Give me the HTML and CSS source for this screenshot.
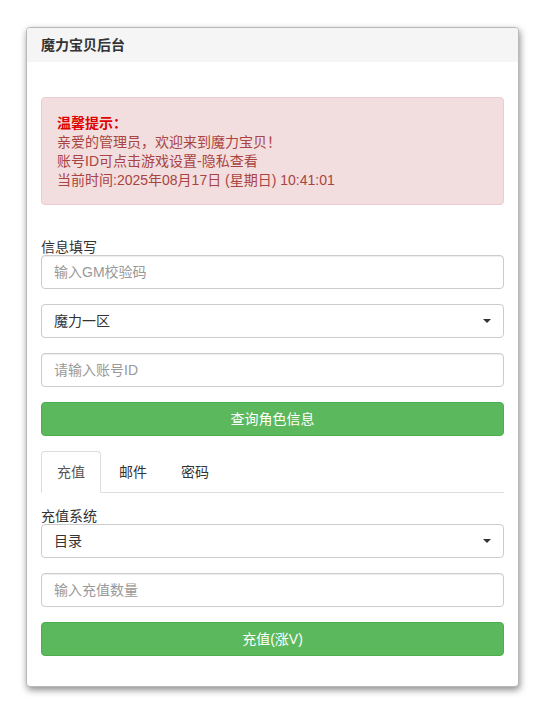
FILE: index.html
```html
<!DOCTYPE html>
<html lang="zh-CN">
<head>
<meta charset="utf-8">
<title>魔力宝贝后台</title>
<link rel="stylesheet" href="styles.css">
</head>
<body>
<div class="panel">
  <div class="panel-heading">魔力宝贝后台</div>
  <div class="panel-body">
    <div class="alert">
      <div class="alert-title">温馨提示：</div>
      <div>亲爱的管理员，欢迎来到魔力宝贝！</div>
      <div>账号ID可点击游戏设置-隐私查看</div>
      <div>当前时间:2025年08月17日 (星期日) 10:41:01</div>
    </div>

    <div class="label">信息填写</div>
    <input class="control" type="text" placeholder="输入GM校验码">
    <div class="control select"><span>魔力一区</span><span class="caret"></span></div>
    <input class="control" type="text" placeholder="请输入账号ID">
    <button class="btn">查询角色信息</button>

    <ul class="tabs">
      <li class="tab active">充值</li>
      <li class="tab">邮件</li>
      <li class="tab">密码</li>
    </ul>

    <div class="label">充值系统</div>
    <div class="control select"><span>目录</span><span class="caret"></span></div>
    <input class="control" type="text" placeholder="输入充值数量">
    <button class="btn">充值(涨V)</button>
  </div>
</div>
</body>
</html>
```
FILE: styles.css
```css
* { box-sizing: border-box; }
html, body { margin: 0; background: #fff; }
body {
  padding: 27px 26px;
  font-family: "Liberation Sans", "Noto Sans CJK SC", sans-serif;
  font-size: 14px;
  line-height: 20px;
  color: #333;
}
.panel {
  border: 1px solid #b8b8b8;
  border-radius: 4px;
  background: #fff;
  box-shadow: 1px 3px 7px rgba(0, 0, 0, 0.45);
}
.panel-heading {
  background: #f5f5f5;
  padding: 9px 14px 8px;
  font-weight: bold;
  font-size: 14px;
  line-height: 17px;
  color: #333;
  border-radius: 3px 3px 0 0;
}
.panel-body {
  padding: 35px 14px 30px;
  display: flex;
  flex-direction: column;
}
.alert {
  background: #f2dede;
  border: 1px solid #ebccd1;
  border-radius: 4px;
  color: #a94442;
  padding: 16px 15px 14px;
  line-height: 19px;
  margin-bottom: 10px;
}
.alert-title {
  color: #e00000;
  font-weight: bold;
}
.label {
  margin-top: 20px;
  padding-top: 4px;
  line-height: 16px;
  color: #333;
}
.control {
  display: block;
  width: 100%;
  height: 34px;
  border: 1px solid #ccc;
  border-radius: 4px;
  padding: 6px 12px;
  font-family: inherit;
  font-size: 14px;
  line-height: 20px;
  color: #555;
  background: #fff;
  margin-bottom: 15px;
  box-shadow: inset 0 1px 1px rgba(0, 0, 0, 0.075);
}
.control::placeholder { color: #999; }
.select {
  display: flex;
  align-items: center;
  justify-content: space-between;
  color: #333;
  box-shadow: none;
}
.caret {
  width: 0;
  height: 0;
  border-left: 4px solid transparent;
  border-right: 4px solid transparent;
  border-top: 4px solid #333;
}
.btn {
  display: block;
  width: 100%;
  height: 34px;
  border: 1px solid #4cae4c;
  border-radius: 4px;
  background: #5cb85c;
  color: #fff;
  font-family: inherit;
  font-size: 14px;
  line-height: 20px;
  padding: 6px 12px;
  text-align: center;
}
.tabs {
  list-style: none;
  margin: 15px 0 0;
  padding: 0;
  display: flex;
  border-bottom: 1px solid #ddd;
}
.tab {
  padding: 10px 15px;
  line-height: 20px;
  margin-right: 2px;
  margin-bottom: -1px;
  border: 1px solid transparent;
  border-radius: 4px 4px 0 0;
  color: #333;
}
.tab.active {
  border-color: #ddd #ddd transparent;
  background: #fff;
  color: #555;
}
.tabs + .label { margin-top: 11px; }
```
